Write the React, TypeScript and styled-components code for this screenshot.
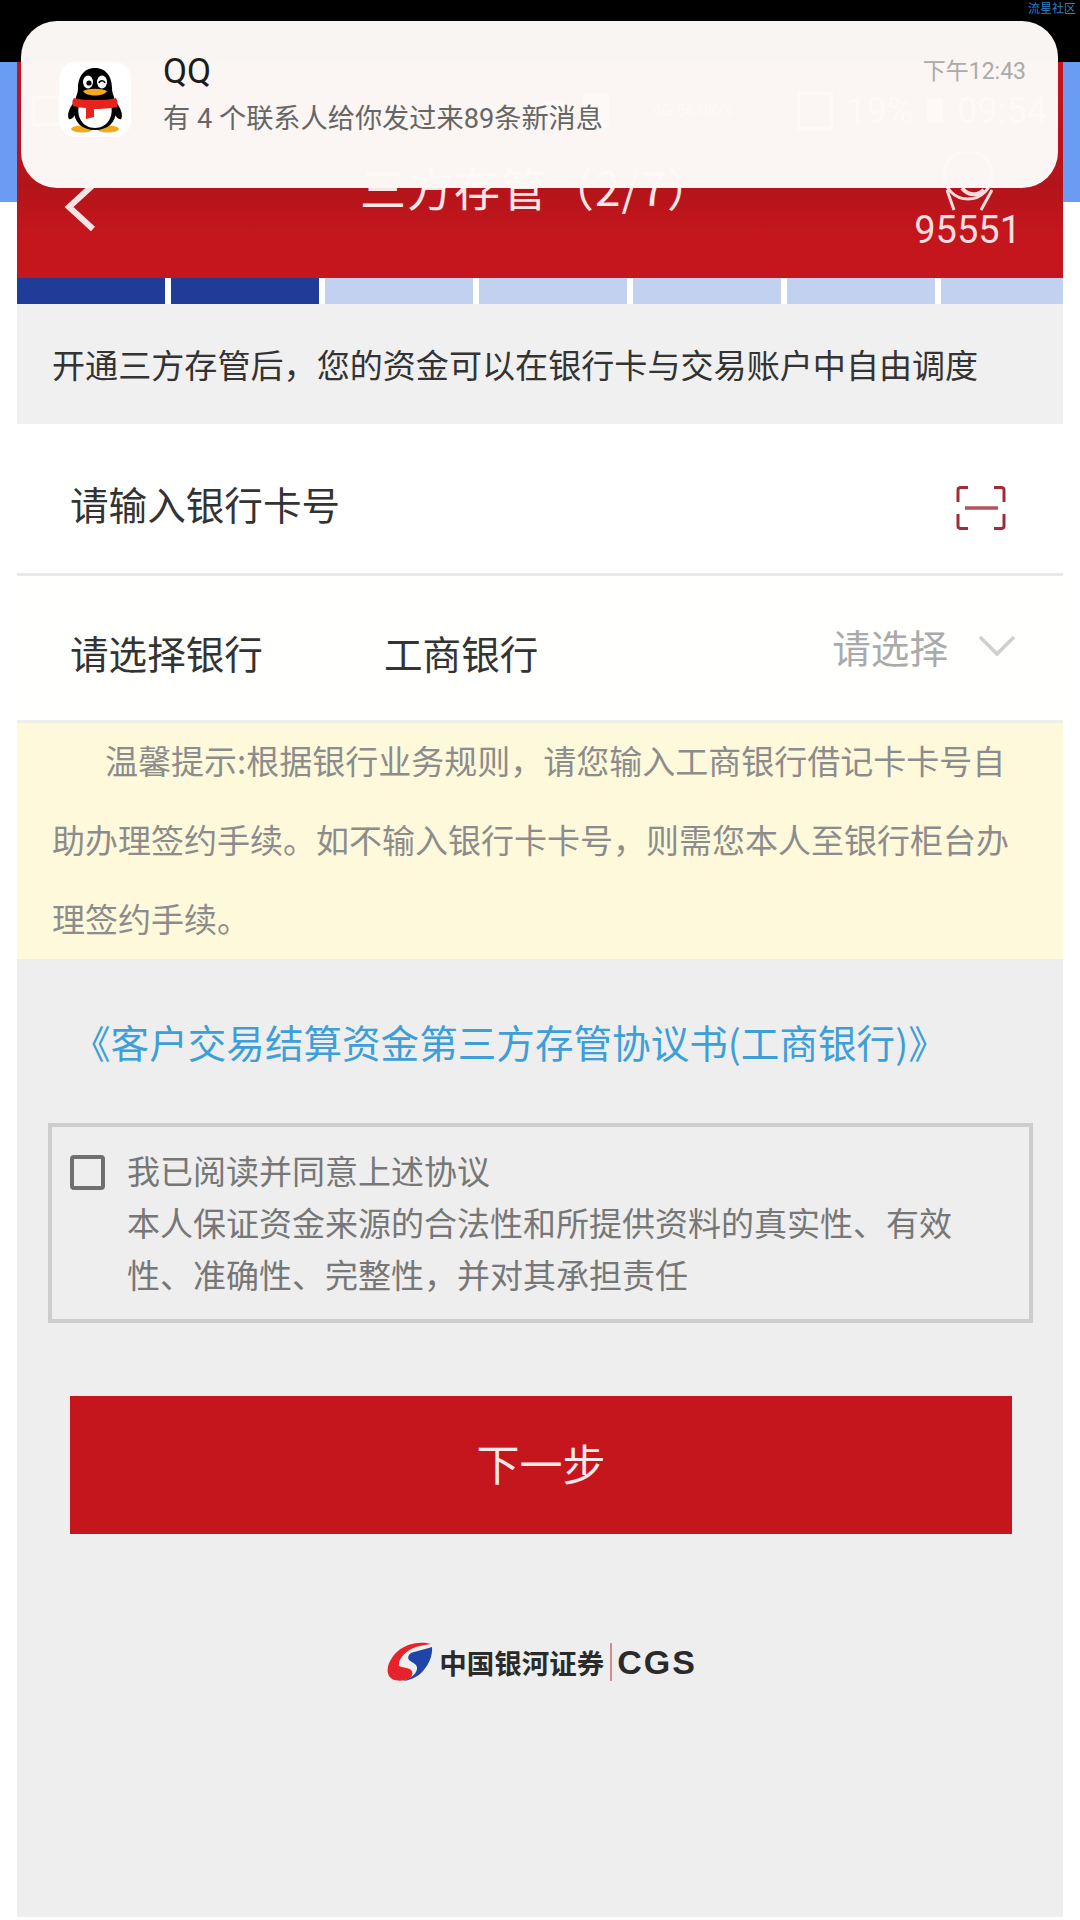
import styled, { createGlobalStyle } from "styled-components";

const FONT = `"Noto Sans CJK SC", "Noto Sans", sans-serif`;
const LATIN = `Roboto, "Noto Sans CJK SC", sans-serif`;

const GlobalStyle = createGlobalStyle`
    html, body {
        margin: 0;
        padding: 0;
        background: #fff;
    }
    * {
        box-sizing: border-box;
    }
    body {
        font-family: ${FONT};
    }
`;

const steps = [true, true, false, false, false, false, false];

const Penguin = () => (
    <svg width="56" height="66" viewBox="0 0 56 66">
        <ellipse cx="15" cy="62" rx="11" ry="3.5" fill="#f0a81c" />
        <ellipse cx="41" cy="62" rx="11" ry="3.5" fill="#f0a81c" />
        <path d="M8 34 C1 42 0 49 2 52 C4 53 7 50 9 46 Z" fill="#000" />
        <path d="M48 34 C55 42 56 49 54 52 C52 53 49 50 47 46 Z" fill="#000" />
        <path d="M28 1 C16 1 11 11 11 21 C11 25 10 27 9 30 L7 44 C7 55 15 63 28 63 C41 63 49 55 49 44 L47 30 C46 27 45 25 45 21 C45 11 40 1 28 1 Z" fill="#000" />
        <path d="M12 38 C12 32 44 32 44 38 C47 50 40 61 28 61 C16 61 9 50 12 38 Z" fill="#fff" />
        <ellipse cx="21" cy="15" rx="5" ry="6.5" fill="#fff" />
        <ellipse cx="35" cy="15" rx="5" ry="6.5" fill="#fff" />
        <circle cx="22" cy="16" r="2.6" fill="#000" />
        <path d="M32 16 C33 13 37 13 38 16" fill="none" stroke="#000" strokeWidth="1.6" />
        <path d="M16 24 C22 21 34 21 40 24 C37 30 19 30 16 24 Z" fill="#f5a91d" />
        <path d="M7 31 C18 34 38 34 49 31 C51 34 51 37 50 40 C40 42 30 42 27 42 L27 50 L19 52 L19 41 C15 41 10 40 6 39 C5 36 5 33 7 31 Z" fill="#e8231e" />
    </svg>
);

const BackIcon = () => (
    <svg width="36" height="50" viewBox="0 0 36 50">
        <path d="M30 3 L6 25 L30 47" fill="none" stroke="#f6e4e4" strokeWidth="6" />
    </svg>
);

const HeadsetIcon = () => (
    <svg width="60" height="62" viewBox="0 0 60 62" fill="none" stroke="#f6dcdc" strokeWidth="3">
        <circle cx="30" cy="23" r="24" />
        <path d="M9 38 L16 58 M54 38 L43 58" />
        <path d="M24 36 C30 44 40 44 46 38" strokeWidth="4" />
    </svg>
);

const ScanIcon = () => (
    <svg width="50" height="44" viewBox="0 0 50 44" fill="none" stroke="#a02c38" strokeWidth="3">
        <path d="M2 16 V4 C2 2.5 3 1.5 5 1.5 H12" />
        <path d="M38 1.5 H45 C47 1.5 48 2.5 48 4 V16" />
        <path d="M2 28 V40 C2 41.5 3 42.5 5 42.5 H12" />
        <path d="M38 42.5 H45 C47 42.5 48 41.5 48 40 V28" />
        <path d="M9 22 H42" stroke="#b5525c" strokeWidth="3.5" />
    </svg>
);

const ArrowDown = () => (
    <svg width="38" height="22" viewBox="0 0 38 22">
        <path d="M2 2 L19 19 L36 2" fill="none" stroke="#cfcfcf" strokeWidth="3.5" />
    </svg>
);

const WifiGhost = () => (
    <svg width="30" height="24" viewBox="0 0 30 24" fill="none" stroke="#fff" strokeWidth="3">
        <path d="M2 8 C10 1 20 1 28 8 M7 14 C12 10 18 10 23 14" />
        <circle cx="15" cy="20" r="2" fill="#fff" />
    </svg>
);

const LogoMark = () => (
    <svg width="46" height="40" viewBox="0 0 46 40">
        <path d="M44 2 C34 -1 20 1 11 9 C3 16 -2 27 2 34 C5 39 14 40 21 37 C25 35 27 31 24 28 C21 25 15 26 12 24 C11 18 17 11 24 7 C30 4 38 3 44 2 Z" fill="#e6222a" />
        <path d="M45 5 C46 14 41 25 33 32 C28 36 21 39 15 39 C22 37 29 33 30 27 C31 22 25 21 22 18 C20 15 22 11 27 10 C33 8 40 7 45 5 Z" fill="#1f45a8" />
    </svg>
);

const App = () => {
    return (
        <Shell>
            <GlobalStyle />
            <TopBar>
                <Watermark>流星社区</Watermark>
            </TopBar>
            <Screen>
                <Page>
                    <Header>
                        <StatusBar>
                            <GhostBox />
                            <StatusRight>
                                <WifiGhost />
                                <GhostBlock />
                                <GhostSmall>4G 56.0K/s</GhostSmall>
                                <GhostFrame />
                                <GhostText>19%</GhostText>
                                <GhostBattery />
                                <GhostText>09:54</GhostText>
                            </StatusRight>
                        </StatusBar>
                        <NavBar>
                            <BackButton>
                                <BackIcon />
                            </BackButton>
                            <Title>三方存管（2/7）</Title>
                            <Help>
                                <HeadsetIcon />
                                <HelpNumber>95551</HelpNumber>
                            </Help>
                        </NavBar>
                    </Header>
                    <Steps>
                        {steps.map((done, i) => (
                            <Step key={i} $done={done} />
                        ))}
                    </Steps>
                    <Intro>开通三方存管后，您的资金可以在银行卡与交易账户中自由调度</Intro>
                    <CardRow>
                        <CardLabel>请输入银行卡号</CardLabel>
                        <ScanIcon />
                    </CardRow>
                    <BankRow>
                        <BankLabel>请选择银行</BankLabel>
                        <BankName>工商银行</BankName>
                        <Picker>
                            <PickerText>请选择</PickerText>
                            <ArrowDown />
                        </Picker>
                    </BankRow>
                    <Notice>
                        <NoticeText>
                            温馨提示:根据银行业务规则，请您输入工商银行借记卡卡号自助办理签约手续。如不输入银行卡卡号，则需您本人至银行柜台办理签约手续。
                        </NoticeText>
                    </Notice>
                    <AgreementLink>《客户交易结算资金第三方存管协议书(工商银行)》</AgreementLink>
                    <ConsentBox>
                        <CheckBox />
                        <ConsentText>
                            我已阅读并同意上述协议
                            <br />
                            本人保证资金来源的合法性和所提供资料的真实性、有效性、准确性、完整性，并对其承担责任
                        </ConsentText>
                    </ConsentBox>
                    <NextButton>下一步</NextButton>
                    <Logo>
                        <LogoMark />
                        <LogoName>中国银河证券</LogoName>
                        <LogoDivider />
                        <LogoLatin>CGS</LogoLatin>
                    </Logo>
                </Page>
            </Screen>
            <Notification>
                <AppTile>
                    <Penguin />
                </AppTile>
                <NotifBody>
                    <NotifTitle>QQ</NotifTitle>
                    <NotifMessage>有 4 个联系人给你发过来89条新消息</NotifMessage>
                </NotifBody>
                <NotifTime>下午12:43</NotifTime>
            </Notification>
        </Shell>
    );
};

const Shell = styled.div`
    position: relative;
    width: 1080px;
    height: 1920px;
    overflow: hidden;
    background: #fff;
`;

const TopBar = styled.div`
    height: 62px;
    background: #000;
    display: flex;
    justify-content: flex-end;
`;

const Watermark = styled.div`
    width: 52px;
    padding-top: 1px;
    font-size: 12px;
    line-height: 13px;
    color: #2f80c4;
    white-space: nowrap;
`;

const Screen = styled.div`
    padding: 0 17px 3px;
    background: linear-gradient(#6b9cf4, #6b9cf4) top / 100% 140px no-repeat;
`;

const Page = styled.div`
    height: 1855px;
    background: #eeeeee;
    display: flex;
    flex-direction: column;
`;

const Header = styled.header`
    height: 216px;
    flex: none;
    background: linear-gradient(#c4161c 0, #b3141a 58%, #c5161d 80%);
    color: #fff;
`;

const StatusBar = styled.div`
    height: 76px;
    padding: 21px 16px 0 14px;
    display: flex;
    justify-content: space-between;
    align-items: center;
`;

const GhostBox = styled.div`
    width: 30px;
    height: 30px;
    border: 3px solid #fff;
    border-radius: 4px;
`;

const StatusRight = styled.div`
    display: flex;
    align-items: center;
    gap: 14px;
`;

const GhostBlock = styled.div`
    width: 26px;
    height: 34px;
    background: #fff;
    border-radius: 3px;
`;

const GhostSmall = styled.div`
    width: 100px;
    margin: 0 30px;
    font: 16px/18px ${LATIN};
    color: #fff;
`;

const GhostFrame = styled.div`
    width: 36px;
    height: 38px;
    border: 3px solid #fff;
`;

const GhostText = styled.div`
    font: 36px/40px ${LATIN};
    color: #fff;
`;

const GhostBattery = styled.div`
    width: 16px;
    height: 24px;
    background: #fff;
`;

const NavBar = styled.div`
    height: 140px;
    position: relative;
    display: flex;
    padding-left: 46px;
`;

const BackButton = styled.div`
    width: 297px;
    padding-top: 44px;
`;

const Title = styled.h1`
    margin: 23px 0 0;
    font-size: 46px;
    line-height: 50px;
    letter-spacing: 1px;
    font-weight: 400;
    color: #f8e6e6;
    white-space: nowrap;
`;

const Help = styled.div`
    position: absolute;
    right: 42px;
    top: 14px;
    display: flex;
    flex-direction: column;
    align-items: center;
`;

const HelpNumber = styled.div`
    margin-top: -4px;
    font: 38px/40px ${LATIN};
    color: #f8dede;
`;

const Steps = styled.div`
    height: 26px;
    flex: none;
    display: grid;
    grid-template-columns: repeat(6, 148px) 1fr;
    column-gap: 6px;
    background: #fff;
`;

const Step = styled.div<{ $done: boolean }>`
    background: ${(p) => (p.$done ? "#1f3c98" : "#c1d1ef")};
`;

const Intro = styled.p`
    height: 120px;
    flex: none;
    margin: 0;
    padding: 0 35px;
    display: flex;
    align-items: center;
    font-size: 33.1px;
    color: #333;
    background: #f0f0f0;
    white-space: nowrap;
`;

const CardRow = styled.div`
    height: 152px;
    flex: none;
    padding: 18px 57px 0 53px;
    display: flex;
    justify-content: space-between;
    align-items: center;
    background: #fff;
    border-bottom: 3px solid #e9e9e9;
`;

const RowLabel = styled.span`
    font-size: 38.6px;
    color: #333;
`;

const CardLabel = styled(RowLabel)`
    margin-bottom: 10px;
`;

const BankRow = styled.div`
    height: 147px;
    flex: none;
    padding: 8px 47px 0 53px;
    display: flex;
    align-items: center;
    background: #fffffd;
    border-bottom: 3px solid #eeeeea;
`;

const BankLabel = styled(RowLabel)`
    width: 314px;
`;

const BankName = styled(RowLabel)`
    flex: 1;
`;

const Picker = styled.div`
    display: flex;
    align-items: center;
    gap: 30px;
    margin-top: -12px;
`;

const PickerText = styled.span`
    font-size: 38.6px;
    color: #aaa;
`;

const Notice = styled.div`
    height: 236px;
    flex: none;
    padding: 0 35px;
    background: #fef9db;
`;

const NoticeText = styled.div`
    margin-top: -2px;
    font-size: 33px;
    line-height: 79px;
    text-indent: 53px;
    color: #8c8c8c;
`;

const AgreementLink = styled.div`
    flex: none;
    margin-top: 52px;
    padding-left: 55px;
    font-size: 38.6px;
    line-height: 60px;
    color: #3d9fd8;
    white-space: nowrap;
`;

const ConsentBox = styled.div`
    flex: none;
    height: 200px;
    margin: 52px 30px 0 31px;
    padding: 17px 40px 0 18px;
    display: flex;
    gap: 22px;
    border: 4px solid #cdcdcd;
`;

const CheckBox = styled.div`
    flex: none;
    width: 35px;
    height: 35px;
    margin-top: 11px;
    border: 4px solid #6f6f6f;
    border-radius: 4px;
`;

const ConsentText = styled.div`
    font-size: 33px;
    line-height: 52px;
    color: #777;
`;

const NextButton = styled.button`
    flex: none;
    display: block;
    height: 138px;
    margin: 73px 51px 0 53px;
    padding: 0 0 6px;
    border: none;
    font-family: ${FONT};
    font-size: 43px;
    color: #f8e8e8;
    background: #c5161d;
`;

const Logo = styled.div`
    flex: none;
    margin-top: 108px;
    display: flex;
    justify-content: center;
    align-items: center;
    height: 40px;
    padding-left: 4px;
`;

const LogoName = styled.span`
    margin-left: 6px;
    font-size: 27.5px;
    font-weight: 700;
    color: #2a2a2a;
    white-space: nowrap;
`;

const LogoDivider = styled.span`
    width: 2px;
    height: 38px;
    margin: 0 5px 0 6px;
    background: #d98a90;
`;

const LogoLatin = styled.span`
    font: 700 34px/40px "Liberation Sans", sans-serif;
    letter-spacing: 2px;
    color: #2a2a2a;
`;

const Notification = styled.div`
    position: absolute;
    left: 21px;
    top: 21px;
    width: 1037px;
    height: 167px;
    padding: 41px 32px 0 38px;
    display: flex;
    align-items: flex-start;
    border-radius: 36px;
    background: rgba(252, 249, 247, 0.985);
`;

const AppTile = styled.div`
    flex: none;
    width: 72px;
    height: 75px;
    display: flex;
    align-items: center;
    justify-content: center;
    background: #fff;
    border-radius: 16px;
`;

const NotifBody = styled.div`
    flex: 1;
    margin: -12px 0 0 32px;
`;

const NotifTitle = styled.div`
    font: 35px/44px ${LATIN};
    color: #1c1c1c;
`;

const NotifMessage = styled.div`
    margin-top: 5px;
    font: 27.2px/40px ${LATIN};
    color: #666;
    white-space: nowrap;
`;

const NotifTime = styled.div`
    margin-top: -5px;
    font: 23px/30px ${LATIN};
    color: #aaa;
    white-space: nowrap;
`;

export default App;
